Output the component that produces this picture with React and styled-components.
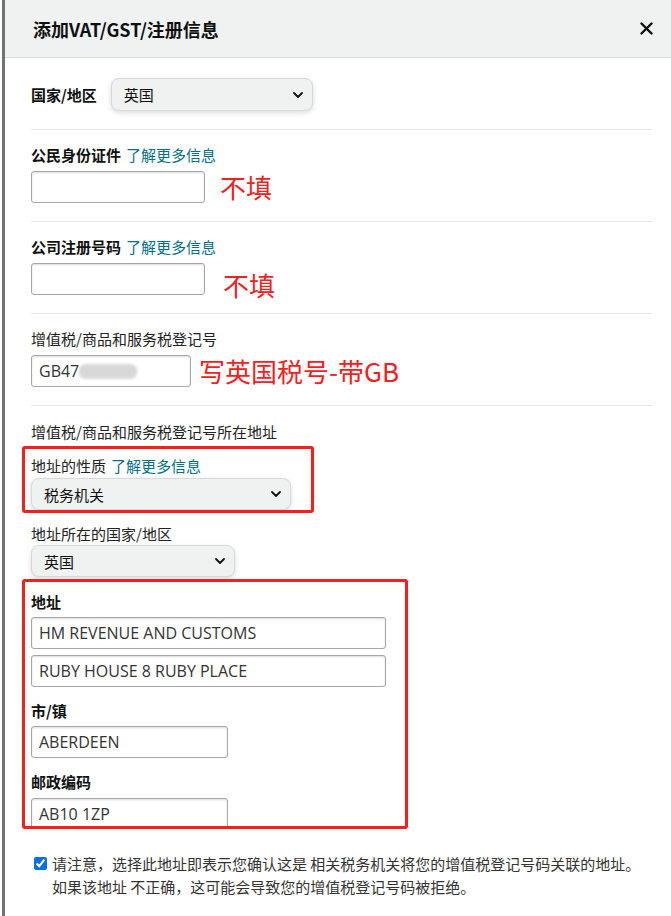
import React from 'react';
import styled, { createGlobalStyle } from 'styled-components';

const GlobalStyle = createGlobalStyle`
  body {
    margin: 0;
    background: #ffffff;
    font-family: "Noto Sans CJK SC", "Noto Sans", sans-serif;
  }
`;

const ChevronIcon = () => (
  <svg width="10" height="6" viewBox="0 0 10 6" fill="none">
    <path d="M1 1l4 4 4-4" stroke="#0f1111" strokeWidth="1.8" strokeLinecap="round" strokeLinejoin="round" />
  </svg>
);

const CloseIcon = () => (
  <svg width="13" height="13" viewBox="0 0 13 13" fill="none">
    <path d="M1.5 1.5l10 10M11.5 1.5l-10 10" stroke="#0f1111" strokeWidth="2.4" strokeLinecap="round" />
  </svg>
);

const App = () => {
  return (
    <>
      <GlobalStyle />
      <Frame>
        <EdgeBar />
        <Modal>
          <Header>
            <Title>添加VAT/GST/注册信息</Title>
            <CloseButton>
              <CloseIcon />
            </CloseButton>
          </Header>
          <Body>
            <Section $top={20} $bottom={18} $divider>
              <InlineRow>
                <Label $bold>国家/地区</Label>
                <Dropdown $width={202} $height={33}>
                  英国
                  <ChevronIcon />
                </Dropdown>
              </InlineRow>
            </Section>

            <Section $divider>
              <Label $bold>
                公民身份证件<HelpLink>了解更多信息</HelpLink>
              </Label>
              <FieldRow>
                <TextInput $width={174} readOnly value="" />
                <Note $left={15}>不填</Note>
              </FieldRow>
            </Section>

            <Section $divider>
              <Label $bold>
                公司注册号码<HelpLink>了解更多信息</HelpLink>
              </Label>
              <FieldRow>
                <TextInput $width={174} readOnly value="" />
                <Note $left={18} $drop={6}>
                  不填
                </Note>
              </FieldRow>
            </Section>

            <Section $divider>
              <Label>增值税/商品和服务税登记号</Label>
              <FieldRow>
                <InputWrap>
                  <TextInput $width={160} readOnly value="GB47" />
                  <Redaction />
                </InputWrap>
                <Note $left={8}>写英国税号-带GB</Note>
              </FieldRow>
            </Section>

            <Section $top={16} $bottom={0}>
              <Label>增值税/商品和服务税登记号所在地址</Label>

              <Marked $width={292} $gap={4} $top={7}>
                <Label>
                  地址的性质<HelpLink>了解更多信息</HelpLink>
                </Label>
                <Dropdown $width={260} $gap={2}>
                  税务机关
                  <ChevronIcon />
                </Dropdown>
              </Marked>

              <Label $gap={11}>地址所在的国家/地区</Label>
              <Dropdown $width={204} $gap={1}>
                英国
                <ChevronIcon />
              </Dropdown>

              <Marked $width={386} $height={250} $gap={2} $top={10}>
                <Label $bold>地址</Label>
                <TextInput $width={355} $gap={5} readOnly value="HM REVENUE AND CUSTOMS" />
                <TextInput $width={355} $gap={6} readOnly value="RUBY HOUSE 8 RUBY PLACE" />
                <Label $bold $gap={14}>
                  市/镇
                </Label>
                <TextInput $width={197} $gap={5} readOnly value="ABERDEEN" />
                <Label $bold $gap={14}>
                  邮政编码
                </Label>
                <TextInput $width={197} $gap={6} readOnly value="AB10 1ZP" />
              </Marked>

              <Consent>
                <ConsentBox type="checkbox" defaultChecked />
                <ConsentText>
                  请注意，选择此地址即表示您确认这是 相关税务机关将您的增值税登记号码关联的地址。
                  <br />
                  如果该地址 不正确，这可能会导致您的增值税登记号码被拒绝。
                </ConsentText>
              </Consent>
            </Section>
          </Body>
        </Modal>
      </Frame>
    </>
  );
};

export default App;

const Frame = styled.div`
  display: flex;
  min-height: 916px;
`;

const EdgeBar = styled.div`
  flex-shrink: 0;
  width: 3px;
  margin-left: 2px;
  background-color: #727272;
`;

const Modal = styled.div`
  flex: 1;
  display: flex;
  flex-direction: column;
`;

const Header = styled.div`
  display: flex;
  align-items: center;
  justify-content: space-between;
  height: 57px;
  padding: 0 18px 0 28px;
  background-color: #f0f2f2;
  border-bottom: 1px solid #d5d9d9;
`;

const Title = styled.h1`
  margin: 0;
  font-size: 18px;
  font-weight: 700;
  color: #0f1111;
`;

const CloseButton = styled.button`
  display: flex;
  padding: 0;
  border: none;
  background: none;
  cursor: pointer;
`;

const Body = styled.div`
  padding: 0 19px 0 26px;
`;

const Section = styled.div`
  display: flex;
  flex-direction: column;
  align-items: flex-start;
  padding-top: ${props => props.$top ?? 15}px;
  padding-bottom: ${props => props.$bottom ?? 18}px;
  border-bottom: ${props => (props.$divider ? '1px solid #e3e6e6' : 'none')};
`;

const InlineRow = styled.div`
  display: flex;
  align-items: center;
  gap: 14px;
`;

const Label = styled.div`
  margin-top: ${props => props.$gap || 0}px;
  font-size: 15px;
  line-height: 20px;
  font-weight: ${props => (props.$bold ? 700 : 400)};
  color: ${props => (props.$bold ? '#0f1111' : '#222')};
  white-space: nowrap;
`;

const HelpLink = styled.a`
  margin-left: 5px;
  font-weight: 400;
  color: #007185;
  cursor: pointer;
  &:hover {
    color: #c7511f;
    text-decoration: underline;
  }
`;

const FieldRow = styled.div`
  display: flex;
  align-items: center;
  height: 32px;
  margin-top: 6px;
`;

const InputWrap = styled.div`
  position: relative;
  display: flex;
`;

const TextInput = styled.input`
  box-sizing: border-box;
  flex-shrink: 0;
  width: ${props => props.$width}px;
  height: 32px;
  margin: ${props => props.$gap || 0}px 0 0;
  padding: 0 7px;
  font-family: "Open Sans", "Noto Sans", sans-serif;
  font-size: 16px;
  color: #333;
  background: #fff;
  border: 1px solid #a6a6a6;
  border-radius: 3px;
  box-shadow: inset 0 1px 2px rgba(15, 17, 17, 0.15);
  outline: none;
`;

const Redaction = styled.span`
  position: absolute;
  left: 48px;
  top: 9px;
  width: 58px;
  height: 15px;
  border-radius: 6px;
  background-color: #d8d8d8;
  filter: blur(1.5px);
`;

const Note = styled.span`
  margin-left: ${props => props.$left}px;
  transform: translateY(${props => props.$drop || 0}px);
  font-size: 26px;
  line-height: 32px;
  color: #f4201c;
  white-space: nowrap;
`;

const Dropdown = styled.div`
  box-sizing: border-box;
  display: flex;
  align-items: center;
  justify-content: space-between;
  width: ${props => props.$width}px;
  height: ${props => props.$height || 32}px;
  margin-top: ${props => props.$gap || 0}px;
  padding: 0 9px 0 12px;
  font-size: 15px;
  color: #0f1111;
  background-color: #f0f2f2;
  border: 1px solid #d5d9d9;
  border-radius: 8px;
  box-shadow: 0 2px 5px rgba(15, 17, 17, 0.15);
  cursor: pointer;
`;

const Marked = styled.div`
  box-sizing: border-box;
  display: flex;
  flex-direction: column;
  align-items: flex-start;
  width: ${props => props.$width}px;
  height: ${props => (props.$height ? `${props.$height}px` : 'auto')};
  margin: ${props => props.$gap}px 0 0 -9px;
  padding: ${props => props.$top}px 0 0 6px;
  border: 3px solid #f4201c;
  border-radius: 3px;
  overflow: hidden;
`;

const Consent = styled.label`
  display: flex;
  align-items: flex-start;
  margin-top: 23px;
`;

const ConsentBox = styled.input`
  flex-shrink: 0;
  width: 13px;
  height: 13px;
  margin: 5px 5px 0 3px;
  accent-color: #0b6fe0;
`;

const ConsentText = styled.div`
  font-size: 15px;
  line-height: 23px;
  color: #333;
  white-space: nowrap;
`;
